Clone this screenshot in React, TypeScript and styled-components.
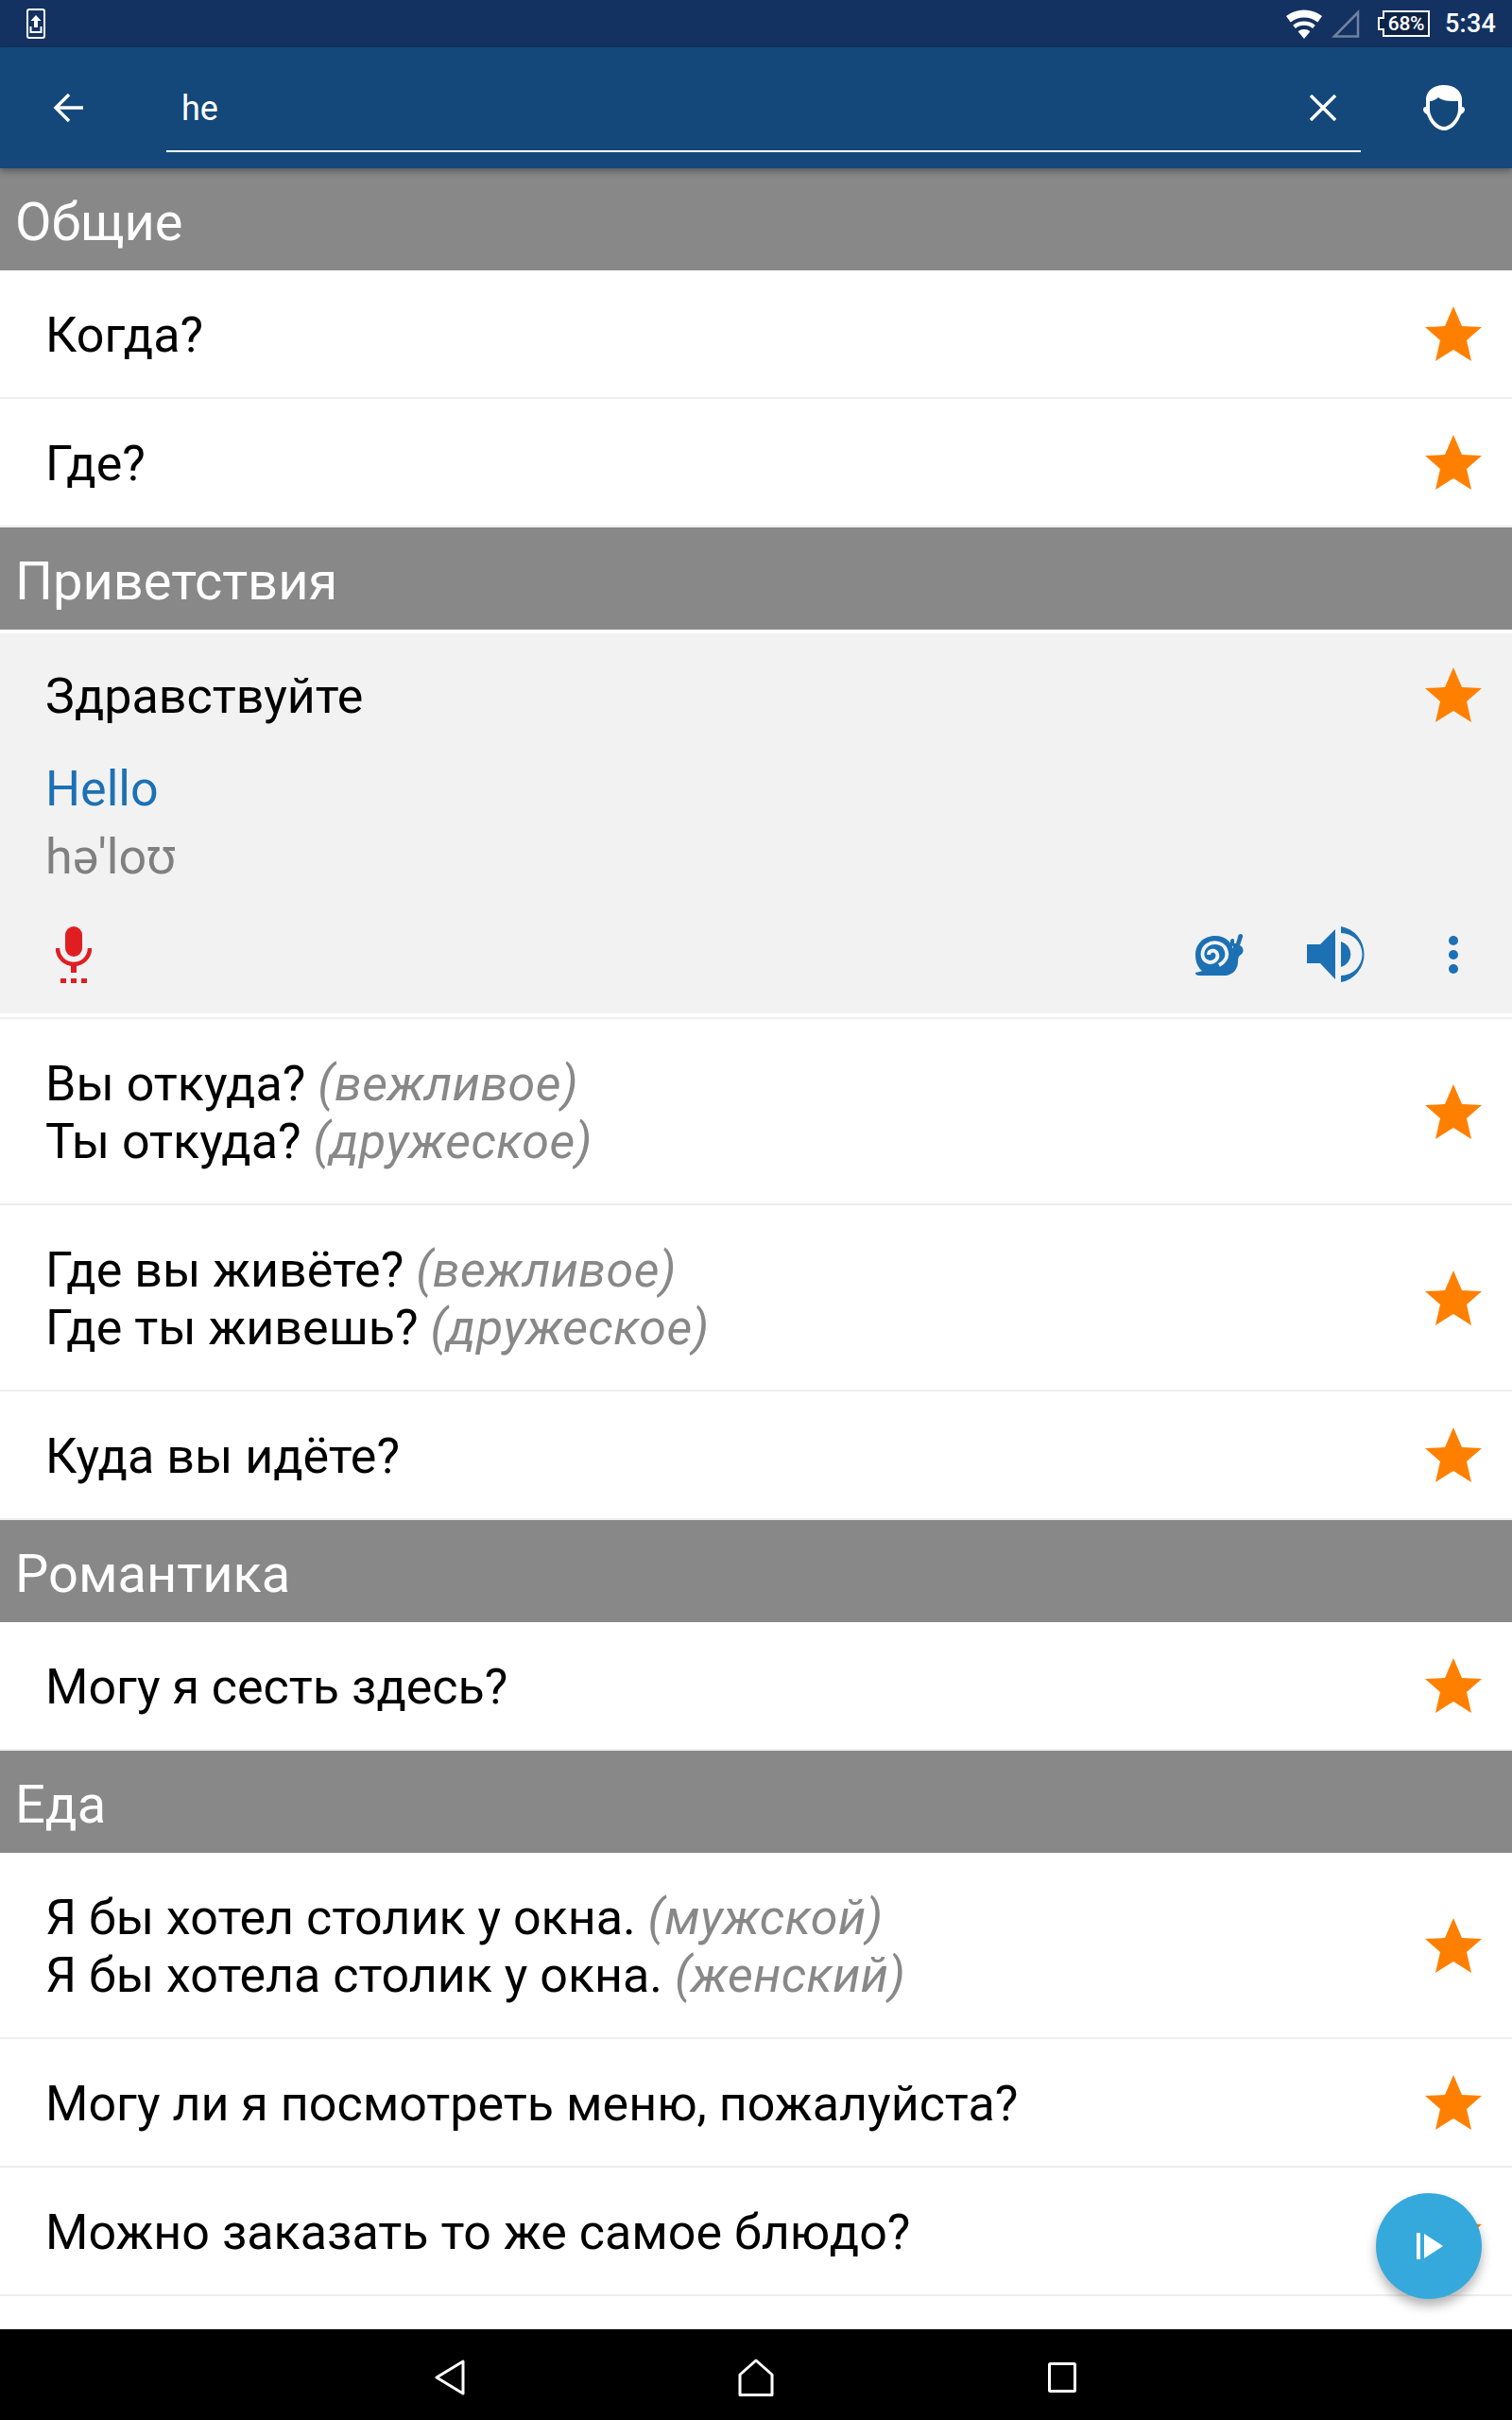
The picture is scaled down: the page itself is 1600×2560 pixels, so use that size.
import React from 'react';
import styled, { createGlobalStyle } from 'styled-components';

const COLORS = {
  status: '#133261',
  toolbar: '#14487a',
  section: '#888888',
  line: '#eeeeee',
  open: '#f2f2f2',
  blue: '#1c71b4',
  star: '#ff8000',
  note: '#888888',
  mic: '#e01e22',
  fab: '#36a9dc',
};

const GlobalStyle = createGlobalStyle`
  html, body { margin: 0; padding: 0; background: #fff; }
  body { font-family: Roboto, "Noto Sans", sans-serif; }
`;

const Screen = styled.div`
  width: 1600px;
  height: 2560px;
  display: flex;
  flex-direction: column;
  overflow: hidden;
  position: relative;
`;

/* status bar */
const StatusBar = styled.div`
  height: 50px;
  flex: none;
  background: ${COLORS.status};
  display: flex;
  align-items: center;
  padding: 0 17px 0 28px;
  color: #fff;
`;
const StatusRight = styled.div`
  margin-left: auto;
  display: flex;
  align-items: center;
`;
const SignalSlot = styled.div`
  margin-left: 10px;
  display: flex;
`;
const Battery = styled.div`
  width: 55px;
  height: 28px;
  margin: 0 16px 0 19px;
  display: flex;
  align-items: center;
  justify-content: center;
  font-size: 21px;
  font-weight: 500;
  letter-spacing: -0.3px;
  position: relative;
  box-sizing: border-box;
  padding-left: 5px;
  svg { position: absolute; inset: 0; }
  span { position: relative; }
`;
const Clock = styled.span`
  font-size: 27px;
  font-weight: 500;
  letter-spacing: 0.2px;
`;

/* toolbar */
const Toolbar = styled.div`
  height: 128px;
  flex: none;
  background: ${COLORS.toolbar};
  display: flex;
  align-items: center;
  position: relative;
  z-index: 2;
  box-shadow: 0 3px 7px rgba(0, 0, 0, 0.35);
`;
const BackSlot = styled.div`
  width: 176px;
  padding-left: 56px;
  box-sizing: border-box;
  display: flex;
`;
const SearchBox = styled.div`
  width: 1264px;
  height: 128px;
  box-sizing: border-box;
  padding: 0 26px 0 16px;
  display: flex;
  align-items: center;
  justify-content: space-between;
  position: relative;
  &::after {
    content: '';
    position: absolute;
    left: 0;
    right: 0;
    top: 109px;
    height: 2px;
    background: #fff;
  }
`;
const SearchText = styled.span`
  color: #fff;
  font-size: 36px;
  padding-top: 2px;
`;
const FaceSlot = styled.div`
  margin-left: 66px;
  display: flex;
`;

/* list */
const List = styled.div`
  flex: 1;
  min-height: 0;
  overflow: hidden;
`;
const SectionHead = styled.div`
  height: 108px;
  box-sizing: border-box;
  background: ${COLORS.section};
  color: #fff;
  font-size: 56px;
  display: flex;
  align-items: center;
  padding: 5px 0 0 16px;
`;
const Row = styled.div<{ $tall?: boolean }>`
  height: ${(p) => (p.$tall ? 197 : 136)}px;
  box-sizing: border-box;
  border-bottom: 2px solid ${COLORS.line};
  display: flex;
  align-items: center;
  justify-content: space-between;
  padding: 0 32px 0 48px;
`;
const Phrase = styled.div`
  font-size: 52px;
  line-height: 61px;
  color: #000;
  padding-top: 3px;
`;
const Note = styled.em`
  color: ${COLORS.note};
  font-style: italic;
  letter-spacing: 0.4px;
`;

/* opened row */
const OpenWrap = styled.div`
  height: 412px;
  box-sizing: border-box;
  padding: 4px 0;
  border-bottom: 2px solid ${COLORS.line};
`;
const OpenPanel = styled.div`
  height: 402px;
  background: ${COLORS.open};
  display: flex;
  flex-direction: column;
`;
const OpenHead = styled.div`
  height: 130px;
  flex: none;
  display: flex;
  align-items: center;
  justify-content: space-between;
  padding: 0 32px 0 48px;
`;
const Translation = styled.div`
  font-size: 52px;
  line-height: 62px;
  padding-left: 48px;
  color: ${COLORS.blue};
  margin-top: 4px;
`;
const Phonetic = styled.div`
  font-size: 52px;
  line-height: 62px;
  padding-left: 48px;
  color: #808080;
  margin-top: 10px;
`;
const Actions = styled.div`
  margin-top: auto;
  height: 92px;
  display: flex;
  align-items: flex-start;
  padding: 0 57px 0 59px;
`;
const MicSlot = styled.div`
  margin-right: auto;
  display: flex;
`;
const SnailSlot = styled.div`
  padding-top: 7px;
  margin-right: 67px;
  display: flex;
`;
const SpeakerSlot = styled.div`
  margin-right: 89px;
  display: flex;
`;
const DotsSlot = styled.div`
  padding-top: 10px;
  display: flex;
`;

/* floating button */
const Fab = styled.div`
  position: absolute;
  left: 1456px;
  top: 2320px;
  width: 112px;
  height: 112px;
  border-radius: 50%;
  background: ${COLORS.fab};
  box-shadow: 0 7px 12px rgba(0, 0, 0, 0.3);
  display: flex;
  align-items: center;
  justify-content: center;
  z-index: 3;
`;

/* navigation bar */
const NavBar = styled.div`
  height: 96px;
  box-sizing: border-box;
  padding-top: 5px;
  flex: none;
  background: #000;
  display: flex;
  align-items: center;
  justify-content: center;
  position: relative;
  z-index: 4;
`;
const NavCell = styled.div`
  width: 324px;
  display: flex;
  justify-content: center;
`;

const Star = () => (
  <svg width="60" height="58" viewBox="0 0 60 58" style={{ flex: 'none' }}>
    <polygon fill={COLORS.star} points="30,0 39,21 60,22 44,36 49,58 30,46 11,58 16,36 0,22 21,21" />
  </svg>
);

const Wifi = () => (
  <svg width="38" height="32" viewBox="0 0 38 32">
    <path fill="#fff" d="M19 32 L12.6 24.3 A10 10 0 0 1 25.4 24.3 Z" />
    <path fill="#fff" d="M9.9 21 A14.5 14.5 0 0 1 28.1 21 L30.8 17.7 A18.8 18.8 0 0 0 7.2 17.7 Z" />
    <path fill="#fff" d="M4.6 14.6 A22.8 22.8 0 0 1 33.4 14.6 L38 8 A31 31 0 0 0 0 8 Z" />
  </svg>
);

const Signal = () => (
  <svg width="30" height="30" viewBox="0 0 30 30">
    <path d="M28 3 V28.5 H3 Z" fill="none" stroke="#6f83a0" strokeWidth="2.5" />
  </svg>
);

const BatteryShape = () => (
  <svg width="55" height="28" viewBox="0 0 55 28">
    <path
      d="M6 1 H54 V27 H6 V20 H1 V8 H6 Z"
      fill="#0d2447"
      stroke="#fff"
      strokeWidth="2"
    />
  </svg>
);

const UploadPhone = () => (
  <svg width="20" height="32" viewBox="0 0 20 32">
    <rect x="1" y="1" width="18" height="30" rx="2" fill="none" stroke="#fff" strokeWidth="2" />
    <path fill="#fff" d="M10 7 L15.5 13 H12 V20 H8 V13 H4.5 Z" />
    <path fill="none" stroke="#fff" strokeWidth="2" d="M4.5 19 V25 H15.5 V19" />
  </svg>
);

const BackArrow = () => (
  <svg width="32" height="32" viewBox="0 0 32 32">
    <path d="M32 16 H3 M17 2 L3 16 L17 30" fill="none" stroke="#fff" strokeWidth="3.4" />
  </svg>
);

const CloseX = () => (
  <svg width="28" height="28" viewBox="0 0 28 28">
    <path d="M1 1 L27 27 M27 1 L1 27" stroke="#fff" strokeWidth="3.4" />
  </svg>
);

const Face = () => (
  <svg width="44" height="48" viewBox="0 0 44 48">
    <path
      fill="#fff"
      fillRule="evenodd"
      d="M22 0 C33 0 40 6 41 14 V23 C43 23 44 24 44 26 C44 28 42 30 40 31 C37 40 30 48 22 48 C14 48 7 40 4 31 C2 30 0 28 0 26 C0 24 1 23 3 23 V14 C4 6 11 0 22 0 Z M7 17 V26 C7 34 15 44 22 44 C29 44 37 34 37 26 V17 C30 17 20 17 16 13 C14 15 10 17 7 17 Z"
    />
  </svg>
);

const Mic = () => (
  <svg width="38" height="60" viewBox="0 0 38 60">
    <rect x="10" y="0" width="18" height="32" rx="9" fill={COLORS.mic} />
    <path d="M2 23 C2 33 10 40 19 40 C28 40 36 33 36 23" fill="none" stroke={COLORS.mic} strokeWidth="4.5" />
    <rect x="16" y="40" width="6" height="9" fill={COLORS.mic} />
    <rect x="5" y="55" width="6" height="5" fill={COLORS.mic} />
    <rect x="16" y="55" width="6" height="5" fill={COLORS.mic} />
    <rect x="27" y="55" width="6" height="5" fill={COLORS.mic} />
  </svg>
);

const Snail = () => (
  <svg width="51" height="46" viewBox="0 0 51 46">
    <path
      fill={COLORS.blue}
      d="M0 42 C3 41 5 41 7 40 C2 36 0 30 0 23 C0 11 9 3 21 3 C31 3 38 9 40 17 L40 14 L37 13 L37 8 C37 6 41 5 41 8 L41 11 L43 11 L45 4 C45 0 51 0 50 4 L47 13 C51 15 52 20 48 23 C46 24 45 26 45 30 C45 38 40 44 32 45 L4 45 C1 45 -1 43 0 42 Z"
    />
    <path
      d="M25 34 C32 30 35 24 32 17 C29 10 19 8 12 13 C6 18 6 27 12 30 C18 33 25 28 23 22 C21 17 14 18 14 23"
      fill="none"
      stroke={COLORS.open}
      strokeWidth="3.8"
    />
  </svg>
);

const Speaker = () => (
  <svg width="61" height="59" viewBox="0 0 61 59">
    <path fill={COLORS.blue} d="M0 19 H14 L30 3 V56 L14 39 H0 Z" />
    <path fill={COLORS.blue} d="M36 16 A14 14 0 0 1 36 43 Z" />
    <path fill={COLORS.blue} d="M36 0 A30 30 0 0 1 36 59 V52 A22.5 22.5 0 0 0 36 7 Z" />
  </svg>
);

const Dots = () => (
  <svg width="10" height="40" viewBox="0 0 10 40">
    <circle cx="5" cy="5" r="5" fill={COLORS.blue} />
    <circle cx="5" cy="20" r="5" fill={COLORS.blue} />
    <circle cx="5" cy="35" r="5" fill={COLORS.blue} />
  </svg>
);

const PlayStep = () => (
  <svg width="28" height="28" viewBox="0 0 28 28" style={{ marginLeft: 2 }}>
    <rect x="0" y="0" width="4" height="28" fill="#fff" />
    <polygon points="8,1 28,14 8,27" fill="#fff" />
  </svg>
);

const NavBack = () => (
  <svg width="32" height="38" viewBox="0 0 32 38">
    <path d="M30 2 V36 L2 19 Z" fill="none" stroke="#fff" strokeWidth="3" strokeLinejoin="round" />
  </svg>
);

const NavHome = () => (
  <svg width="38" height="40" viewBox="0 0 38 40">
    <path d="M2 38.5 V17 L19 2 L36 17 V38.5 Z" fill="none" stroke="#fff" strokeWidth="3" strokeLinejoin="round" />
  </svg>
);

const NavRecent = () => (
  <svg width="30" height="32" viewBox="0 0 30 32">
    <rect x="1.5" y="1.5" width="27" height="29" rx="1" fill="none" stroke="#fff" strokeWidth="3" />
  </svg>
);

const App: React.FC = () => {
  return (
    <Screen>
      <GlobalStyle />
      <StatusBar>
        <UploadPhone />
        <StatusRight>
          <Wifi />
          <SignalSlot>
            <Signal />
          </SignalSlot>
          <Battery>
            <BatteryShape />
            <span>68%</span>
          </Battery>
          <Clock>5:34</Clock>
        </StatusRight>
      </StatusBar>

      <Toolbar>
        <BackSlot>
          <BackArrow />
        </BackSlot>
        <SearchBox>
          <SearchText>he</SearchText>
          <CloseX />
        </SearchBox>
        <FaceSlot>
          <Face />
        </FaceSlot>
      </Toolbar>

      <List>
        <SectionHead>Общие</SectionHead>
        <Row>
          <Phrase>Когда?</Phrase>
          <Star />
        </Row>
        <Row>
          <Phrase>Где?</Phrase>
          <Star />
        </Row>

        <SectionHead>Приветствия</SectionHead>
        <OpenWrap>
          <OpenPanel>
            <OpenHead>
              <Phrase>Здравствуйте</Phrase>
              <Star />
            </OpenHead>
            <Translation>Hello</Translation>
            <Phonetic>hə'loʊ</Phonetic>
            <Actions>
              <MicSlot>
                <Mic />
              </MicSlot>
              <SnailSlot>
                <Snail />
              </SnailSlot>
              <SpeakerSlot>
                <Speaker />
              </SpeakerSlot>
              <DotsSlot>
                <Dots />
              </DotsSlot>
            </Actions>
          </OpenPanel>
        </OpenWrap>
        <Row $tall>
          <Phrase>
            Вы откуда? <Note>(вежливое)</Note>
            <br />
            Ты откуда? <Note>(дружеское)</Note>
          </Phrase>
          <Star />
        </Row>
        <Row $tall>
          <Phrase>
            Где вы живёте? <Note>(вежливое)</Note>
            <br />
            Где ты живешь? <Note>(дружеское)</Note>
          </Phrase>
          <Star />
        </Row>
        <Row>
          <Phrase>Куда вы идёте?</Phrase>
          <Star />
        </Row>

        <SectionHead>Романтика</SectionHead>
        <Row>
          <Phrase>Могу я сесть здесь?</Phrase>
          <Star />
        </Row>

        <SectionHead>Еда</SectionHead>
        <Row $tall>
          <Phrase>
            Я бы хотел столик у окна. <Note>(мужской)</Note>
            <br />
            Я бы хотела столик у окна. <Note>(женский)</Note>
          </Phrase>
          <Star />
        </Row>
        <Row>
          <Phrase>Могу ли я посмотреть меню, пожалуйста?</Phrase>
          <Star />
        </Row>
        <Row>
          <Phrase>Можно заказать то же самое блюдо?</Phrase>
          <Star />
        </Row>
      </List>

      <Fab>
        <PlayStep />
      </Fab>

      <NavBar>
        <NavCell>
          <NavBack />
        </NavCell>
        <NavCell>
          <NavHome />
        </NavCell>
        <NavCell>
          <NavRecent />
        </NavCell>
      </NavBar>
    </Screen>
  );
};

export default App;
